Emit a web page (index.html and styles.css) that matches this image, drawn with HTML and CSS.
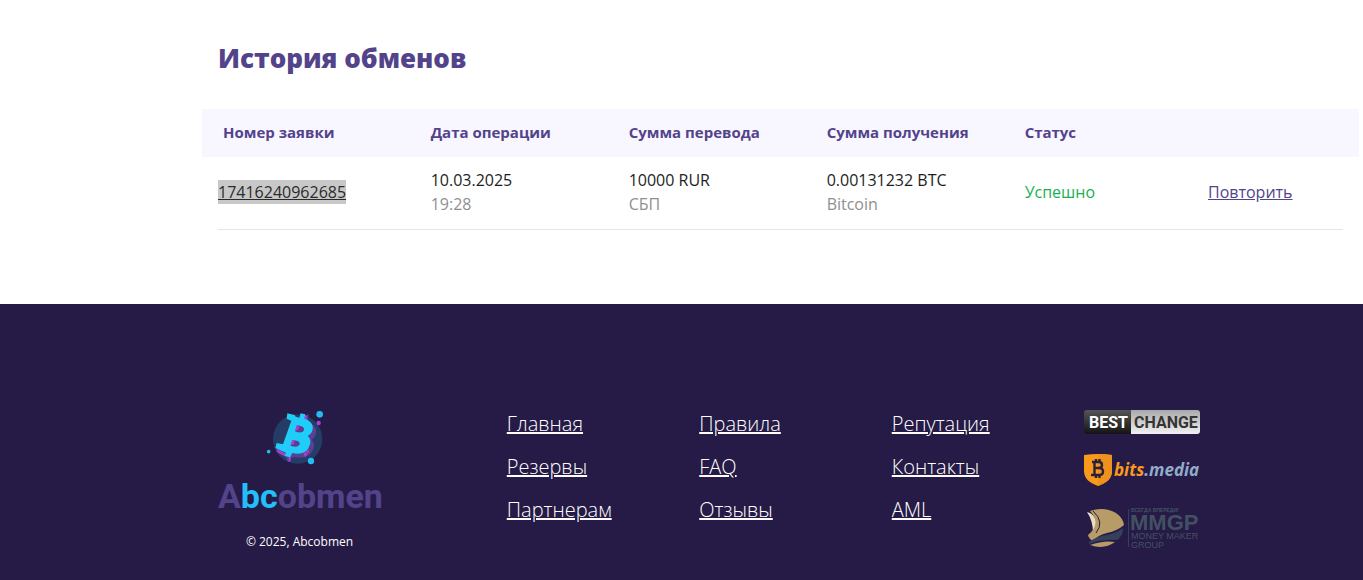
FILE: index.html
```html
<!DOCTYPE html>
<html lang="ru">
<head>
<meta charset="utf-8">
<title>История обменов</title>
<link rel="stylesheet" href="styles.css">
</head>
<body>
<main class="history">
  <h1 class="history-title">История обменов</h1>
  <table class="history-table">
    <thead>
      <tr>
        <th class="col-number" scope="col">Номер заявки</th>
        <th scope="col">Дата операции</th>
        <th scope="col">Сумма перевода</th>
        <th scope="col">Сумма получения</th>
        <th class="col-status" scope="col">Статус</th>
        <td class="col-action"></td>
      </tr>
    </thead>
    <tbody>
      <tr>
        <td><a class="order-link" href="#">17416240962685</a></td>
        <td>10.03.2025<span class="note">19:28</span></td>
        <td>10000 RUR<span class="note">СБП</span></td>
        <td>0.00131232 BTC<span class="note">Bitcoin</span></td>
        <td class="success">Успешно</td>
        <td><a class="repeat-link" href="#">Повторить</a></td>
      </tr>
    </tbody>
  </table>
</main>
<footer class="footer">
  <div class="brand">
    <a href="#" aria-label="Abcobmen">
      <svg class="brand-logo" width="163" height="108" viewBox="0 0 163 108">
        <g transform="translate(42 0) scale(.3333)">
          <circle cx="113" cy="105" r="74" fill="#253d66"/>
          <path d="M98 40l16 4 4 5 10 3 4-13 14-9-3 26c19 5 28 15 25 31-2 11-6 16-13 20 8 10 9 17 5 28-8 20-25 28-52 25l-6 0-10 1-3 13-6 0-4-14-31-17 3-15 20 4 26-70z" fill="#5c3f93"/>
          <path d="M136 32l5 3-2 14-6-4zM86 160l6-8 0 20-6 2zM130 150l8-6 3 9-5 7zM139 143l6-7 2 7-5 8zM50 135l28 15-3 7-20-11z" fill="#ad3ddb"/>
          <path fill-rule="evenodd" d="M82 28L104 33 107 38 118 41 122 28 136 31 133 44C152 50 161 62 158 76C156 87 150 92 143 96C152 104 153 113 149 124C143 144 125 154 97 147L90 160 74 156 78 146 46 132 50 117 69 121 94 50 80 44ZM111 64L105 82C119 88 130 86 132 78C134 70 126 66 111 64ZM97 108L91 125C106 130 116 129 119 121C122 112 110 110 97 108Z" fill="#20cdf9"/>
          <path d="M111 64l6 1-1 11-11 6zM97 108l6 1-1 10-11 6z" fill="#ad3ddb"/>
          <circle cx="179" cy="31" r="10" fill="#22bdf4"/>
          <circle cx="176" cy="57" r="6.500" fill="#ad3ddb"/>
          <circle cx="153" cy="171" r="9.500" fill="#22bdf4"/>
          <circle cx="26" cy="143" r="5.500" fill="#22bdf4"/>
        </g>
        <text class="brand-name" x="0" y="104"><tspan fill="#53438b">A</tspan><tspan fill="#22bffb">bc</tspan><tspan fill="#53438b">obmen</tspan></text>
      </svg>
    </a>
    <p class="copyright">© 2025, Abcobmen</p>
  </div>
  <nav class="links">
    <a href="#">Главная</a>
    <a href="#">Резервы</a>
    <a href="#">Партнерам</a>
  </nav>
  <nav class="links">
    <a href="#">Правила</a>
    <a href="#">FAQ</a>
    <a href="#">Отзывы</a>
  </nav>
  <nav class="links">
    <a href="#">Репутация</a>
    <a href="#">Контакты</a>
    <a href="#">AML</a>
  </nav>
  <div class="partners">
    <a href="#" aria-label="BestChange">
      <svg width="116" height="24" viewBox="0 0 116 24">
        <defs>
          <linearGradient id="dark" x2="0" y2="1"><stop stop-color="#555"/><stop offset="1" stop-color="#141414"/></linearGradient>
          <linearGradient id="light" x2="0" y2="1"><stop stop-color="#a9a9a9"/><stop offset="1" stop-color="#f1f1f1"/></linearGradient>
        </defs>
        <path d="M3 0H47V24H3Q0 24 0 21V3Q0 0 3 0Z" fill="url(#dark)"/>
        <path d="M47 0H113Q116 0 116 3V21Q116 24 113 24H47Z" fill="url(#light)"/>
        <text class="bc-name" x="5" y="18" fill="#fff">BEST</text>
        <text class="bc-name" x="50" y="18" fill="#353535">CHANGE</text>
      </svg>
    </a>
    <a href="#" aria-label="bits.media">
      <svg width="117" height="33" viewBox="0 0 117 33">
        <path d="M0 1Q14-1 28 1V17C28 25 22 29 14 32C6 29 0 25 0 17Z" fill="#f99a1c"/>
        <path d="M14 0Q21 0 28 1V17C28 25 22 29 14 32Z" fill="#ee911d"/>
        <path d="M8 8H15Q18 8 18 11Q18 14 15 14Q19 14 19 17.500Q19 21 15 21H7M10.500 8V21M10 14H16M12 5V8M15.500 5V8M12 21V24M15.500 21V24" fill="none" stroke="#2a2038" stroke-width="2.400"/>
        <text class="bits-name" x="30" y="22"><tspan fill="#f99a1c">bits</tspan><tspan fill="#91abc9">.media</tspan></text>
      </svg>
    </a>
    <a href="#" aria-label="MMGP Money Maker Group">
      <svg width="117" height="42" viewBox="0 0 117 42">
        <path d="M3 5C11 7 16 16 9 26Q9 14 3 5Z" fill="#e8dcc5"/>
        <path d="M6 4Q20-1 32 6Q39 11 40 18Q33 24 23 26Q14 28 9 34Q5 32 4 28Q18 17 6 4Z" fill="#b79c68"/>
        <path d="M9 4Q21 15 12 26" fill="none" stroke="#261b46"/>
        <path d="M5 35Q13 29 23 28Q33 26 39 21Q39 29 33 33Q19 32 5 37Z" fill="#36405b"/>
        <path d="M6 38Q20 33 31 35Q20 43 6 38Z" fill="#b79c68"/>
        <path d="M44.500 2V40" stroke="#3d3d57"/>
        <g fill="#435064">
          <text class="mm-slogan" x="47" y="5">ВСЕГДА ВПЕРЕДИ!</text>
          <text class="mm-name" x="46" y="23">MMGP</text>
          <text class="mm-sub" x="47" y="32">MONEY MAKER</text>
          <text class="mm-sub" x="47" y="41">GROUP</text>
        </g>
      </svg>
    </a>
  </div>
</footer>
</body>
</html>
```
FILE: styles.css
```css
* { box-sizing: border-box; }

body {
  margin: 0;
  display: flex;
  flex-direction: column;
  min-height: 100vh;
  font: 16px/24px "Open Sans", "Noto Sans", sans-serif;
  color: #1c1e24;
  background: #fff;
}

.history { padding: 38px 20px 74px 218px; }

.history-title {
  margin: 0 0 31px;
  font-size: 26px;
  line-height: 40px;
  font-weight: 800;
  color: #53438b;
}

.history-table {
  width: 100%;
  table-layout: fixed;
  border-collapse: separate;
  border-spacing: 0;
}

.history-table th,
.history-table td {
  padding: 11px 0 13px;
  text-align: left;
  white-space: nowrap;
}

.history-table th,
.history-table .col-action {
  color: #53438b;
  background: #f8f6ff;
  font-size: 15px;
  font-weight: 700;
}

.history-table .col-number {
  width: 18.9%;
  padding-left: 5px;
  box-shadow: -16px 0 0 #f8f6ff;
}

.history-table .col-status { width: 16.3%; }

.history-table .col-action {
  width: 12%;
  box-shadow: 16px 0 0 #f8f6ff;
}

.history-table tbody td { border-bottom: 1px solid #e5e5e5; }

.order-link {
  display: inline-block;
  color: #2b2b2b;
  background: #c8c8c8;
}

.note {
  display: block;
  color: #8f8f8f;
}

.history-table .success { color: #1aaf54; }

.repeat-link { color: #53438b; }

.footer {
  flex: 1;
  display: grid;
  grid-template-columns: 3fr 2fr 2fr 2fr 3fr;
  padding: 100px 6px 28px 202px;
  background: #261b46;
  color: #fff;
}

.footer > * { padding: 0 16px; }

.brand a { display: block; }

.brand svg,
.partners svg {
  display: block;
  overflow: visible;
}

.brand-name { font: 700 34px Roboto, sans-serif; }

.copyright {
  width: 163px;
  margin: 20px 0 0;
  font-size: 12px;
  line-height: 20px;
  text-align: center;
}

.links {
  display: flex;
  flex-direction: column;
  align-items: flex-start;
  gap: 13px;
}

.footer .links { padding-top: 5px; }

.links a {
  color: #fff;
  font-size: 20px;
  line-height: 30px;
  font-weight: 300;
  text-decoration-thickness: 2px;
}

.partners {
  display: flex;
  flex-direction: column;
  align-items: flex-start;
  gap: 20px;
}

.footer .partners { padding-top: 6px; }

.bc-name { font: 700 16px Roboto, sans-serif; }
.bits-name { font: italic 700 17px "Open Sans", sans-serif; }
.mm-slogan { font: 700 5px "Liberation Sans", sans-serif; }
.mm-name { font: 700 22px "Liberation Sans", sans-serif; }
.mm-sub { font: 400 9px "Liberation Sans", sans-serif; }
```
